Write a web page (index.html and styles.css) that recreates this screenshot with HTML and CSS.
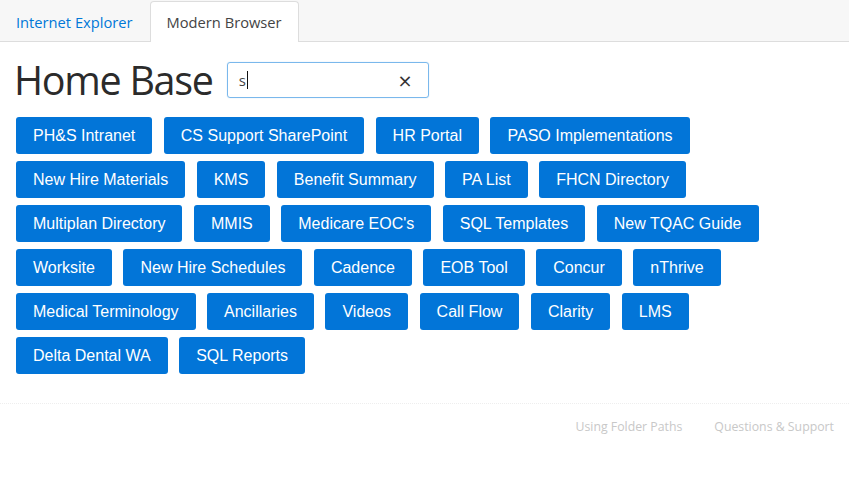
FILE: index.html
```html
<!DOCTYPE html>
<html>
<head>
<meta charset="utf-8">
<link rel="stylesheet" href="styles.css">
</head>
<body>
<nav class="tabs">
  <a class="tab" href="#">Internet Explorer</a>
  <a class="tab active" href="#">Modern Browser</a>
</nav>
<main class="content">
  <div class="header">
    <h1 class="title">Home Base</h1>
    <div class="search">
      <span class="search-text">s</span><span class="caret"></span>
      <span class="clear">×</span>
    </div>
  </div>
  <div class="links">
    <a class="btn" href="#">PH&amp;S Intranet</a>
    <a class="btn" href="#">CS Support SharePoint</a>
    <a class="btn" href="#">HR Portal</a>
    <a class="btn" href="#">PASO Implementations</a>
    <a class="btn" href="#">New Hire Materials</a>
    <a class="btn" href="#">KMS</a>
    <a class="btn" href="#">Benefit Summary</a>
    <a class="btn" href="#">PA List</a>
    <a class="btn" href="#">FHCN Directory</a>
    <a class="btn" href="#">Multiplan Directory</a>
    <a class="btn" href="#">MMIS</a>
    <a class="btn" href="#">Medicare EOC's</a>
    <a class="btn" href="#">SQL Templates</a>
    <a class="btn" href="#">New TQAC Guide</a>
    <a class="btn" href="#">Worksite</a>
    <a class="btn" href="#">New Hire Schedules</a>
    <a class="btn" href="#">Cadence</a>
    <a class="btn" href="#">EOB Tool</a>
    <a class="btn" href="#">Concur</a>
    <a class="btn" href="#">nThrive</a>
    <a class="btn" href="#">Medical Terminology</a>
    <a class="btn" href="#">Ancillaries</a>
    <a class="btn" href="#">Videos</a>
    <a class="btn" href="#">Call Flow</a>
    <a class="btn" href="#">Clarity</a>
    <a class="btn" href="#">LMS</a>
    <a class="btn" href="#">Delta Dental WA</a>
    <a class="btn" href="#">SQL Reports</a>
  </div>
</main>
<footer class="footer">
  <a class="foot-link" href="#">Using Folder Paths</a>
  <a class="foot-link" href="#">Questions &amp; Support</a>
</footer>
</body>
</html>
```

FILE: styles.css
```css
html, body {
  margin: 0;
  padding: 0;
  background: #fff;
}
body {
  font-family: "Open Sans", "Noto Sans", sans-serif;
  color: #333;
}
.tabs {
  display: flex;
  background: #f7f7f7;
  border-bottom: 1px solid #ddd;
  height: 42px;
  padding-top: 1px;
  box-sizing: border-box;
}
.tab {
  display: flex;
  align-items: center;
  padding: 0 16px 0 15px;
  font-size: 14.7px;
  color: #0078d7;
  text-decoration: none;
  border: 1px solid transparent;
  border-bottom: none;
  border-radius: 4px 4px 0 0;
  height: 41px;
  box-sizing: border-box;
}
.tab.active {
  background: #fff;
  color: #444;
  border-color: #ddd;
  padding: 0 16px;
}
.content {
  padding: 18px 15px 0 16px;
}
.header {
  display: flex;
  align-items: center;
  gap: 14px;
}
.title {
  margin: 0 0 0 -2px;
  font-weight: 400;
  font-size: 39.5px;
  letter-spacing: -1.3px;
  line-height: 40px;
  color: #2b2b2b;
  font-family: "Open Sans", "Noto Sans", sans-serif;
}
.search {
  position: relative;
  width: 202px;
  height: 36px;
  box-sizing: border-box;
  border: 1px solid #7ab8ec;
  box-shadow: 0 0 1px rgba(102, 175, 233, 0.6);
  border-radius: 3px;
  display: flex;
  align-items: center;
  padding-left: 11px;
  font-size: 15px;
  color: #444;
}
.caret {
  display: inline-block;
  width: 1px;
  height: 18px;
  background: #111;
  margin-left: 1px;
}
.clear {
  position: absolute;
  right: 15px;
  top: 7px;
  font-size: 18px;
  color: #333;
  font-family: "DejaVu Sans", sans-serif;
}
.links {
  display: flex;
  flex-wrap: wrap;
  gap: 7px 11.5px;
  margin-top: 17px;
  width: 790px;
}
.btn {
  display: inline-block;
  background: #0275d8;
  color: #fff;
  text-decoration: none;
  font-family: "Liberation Sans", Arial, sans-serif;
  font-size: 16px;
  line-height: 37px;
  height: 37px;
  padding: 0 17px;
  border-radius: 3px;
}
.footer {
  margin-top: 29px;
  border-top: 1px dotted #eee;
  display: flex;
  justify-content: flex-end;
  gap: 32px;
  padding: 14px 15px 0 0;
}
.foot-link {
  font-size: 12.3px;
  color: #c8c8c8;
  text-decoration: none;
}
```
